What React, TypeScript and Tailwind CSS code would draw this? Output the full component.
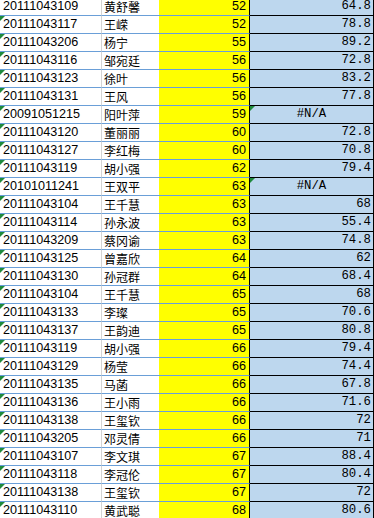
import React from "react";

type Row = [string, string, number, string];

const rows: Row[] = [
  ["20111043109", "黄舒馨", 52, "64.8"],
  ["20111043117", "王嵘", 52, "78.8"],
  ["20111043206", "杨宁", 55, "89.2"],
  ["20111043116", "邹宛廷", 56, "72.8"],
  ["20111043123", "徐叶", 56, "83.2"],
  ["20111043131", "王风", 56, "77.8"],
  ["20091051215", "阳叶萍", 59, "#N/A"],
  ["20111043120", "董丽丽", 60, "72.8"],
  ["20111043127", "李红梅", 60, "70.8"],
  ["20111043119", "胡小强", 62, "79.4"],
  ["20101011241", "王双平", 63, "#N/A"],
  ["20111043104", "王千慧", 63, "68"],
  ["20111043114", "孙永波", 63, "55.4"],
  ["20111043209", "蔡冈谕", 63, "74.8"],
  ["20111043125", "曾嘉欣", 64, "62"],
  ["20111043130", "孙冠群", 64, "68.4"],
  ["20111043104", "王千慧", 65, "68"],
  ["20111043133", "李璨", 65, "70.6"],
  ["20111043137", "王韵迪", 65, "80.8"],
  ["20111043119", "胡小强", 66, "79.4"],
  ["20111043129", "杨莹", 66, "74.4"],
  ["20111043135", "马菡", 66, "67.8"],
  ["20111043136", "王小雨", 66, "71.6"],
  ["20111043138", "王玺钦", 66, "72"],
  ["20111043205", "邓灵倩", 66, "71"],
  ["20111043107", "李文琪", 67, "88.4"],
  ["20111043118", "李冠伦", 67, "80.4"],
  ["20111043138", "王玺钦", 67, "72"],
  ["20111043110", "黄武聪", 68, "80.6"],
];

function Tri() {
  return (
    <span className="absolute left-0 top-0 w-0 h-0 border-t-[5px] border-r-[5px] border-t-[#1f8a3c] border-r-transparent" />
  );
}

export default function App() {
  return (
    <div className="w-[374px] h-[518px] overflow-hidden bg-white text-black">
      <div className="-mt-[2px] flex flex-col">
        {rows.map((r, i) => {
          const na = r[3] === "#N/A";
          return (
            <div key={i} className="flex h-[18px]">
              <div
                className="relative w-[102px] h-[18px] border-b border-r border-b-[#6a9fd8] border-r-[#d4d4d4] pl-[3px] leading-[17px] text-[12.6px]"
                style={{ fontFamily: "'Liberation Sans', Arial, sans-serif" }}
              >
                {i > 0 && <Tri />}
                {r[0]}
              </div>
              <div
                className="w-[57px] h-[18px] border-b border-b-[#6a9fd8] pl-[2px] leading-[17px] text-[12px]"
                style={{ fontFamily: "'Noto Sans CJK SC', sans-serif" }}
              >
                {r[1]}
              </div>
              <div
                className="w-[91px] h-[18px] bg-[#ffff00] border-b border-r border-b-[#6a9fd8] border-r-black pr-[3px] text-right leading-[17px] text-[12.6px]"
                style={{ fontFamily: "'Liberation Sans', Arial, sans-serif" }}
              >
                {r[2]}
              </div>
              <div
                className={`relative w-[124px] h-[18px] bg-[#bdd7ee] border-b border-r border-black leading-[17px] text-[12.3px] ${na ? "text-center" : "text-right pr-[2px]"}`}
                style={{ fontFamily: "'Liberation Mono', 'Courier New', monospace" }}
              >
                {na && <Tri />}
                {r[3]}
              </div>
            </div>
          );
        })}
      </div>
    </div>
  );
}
